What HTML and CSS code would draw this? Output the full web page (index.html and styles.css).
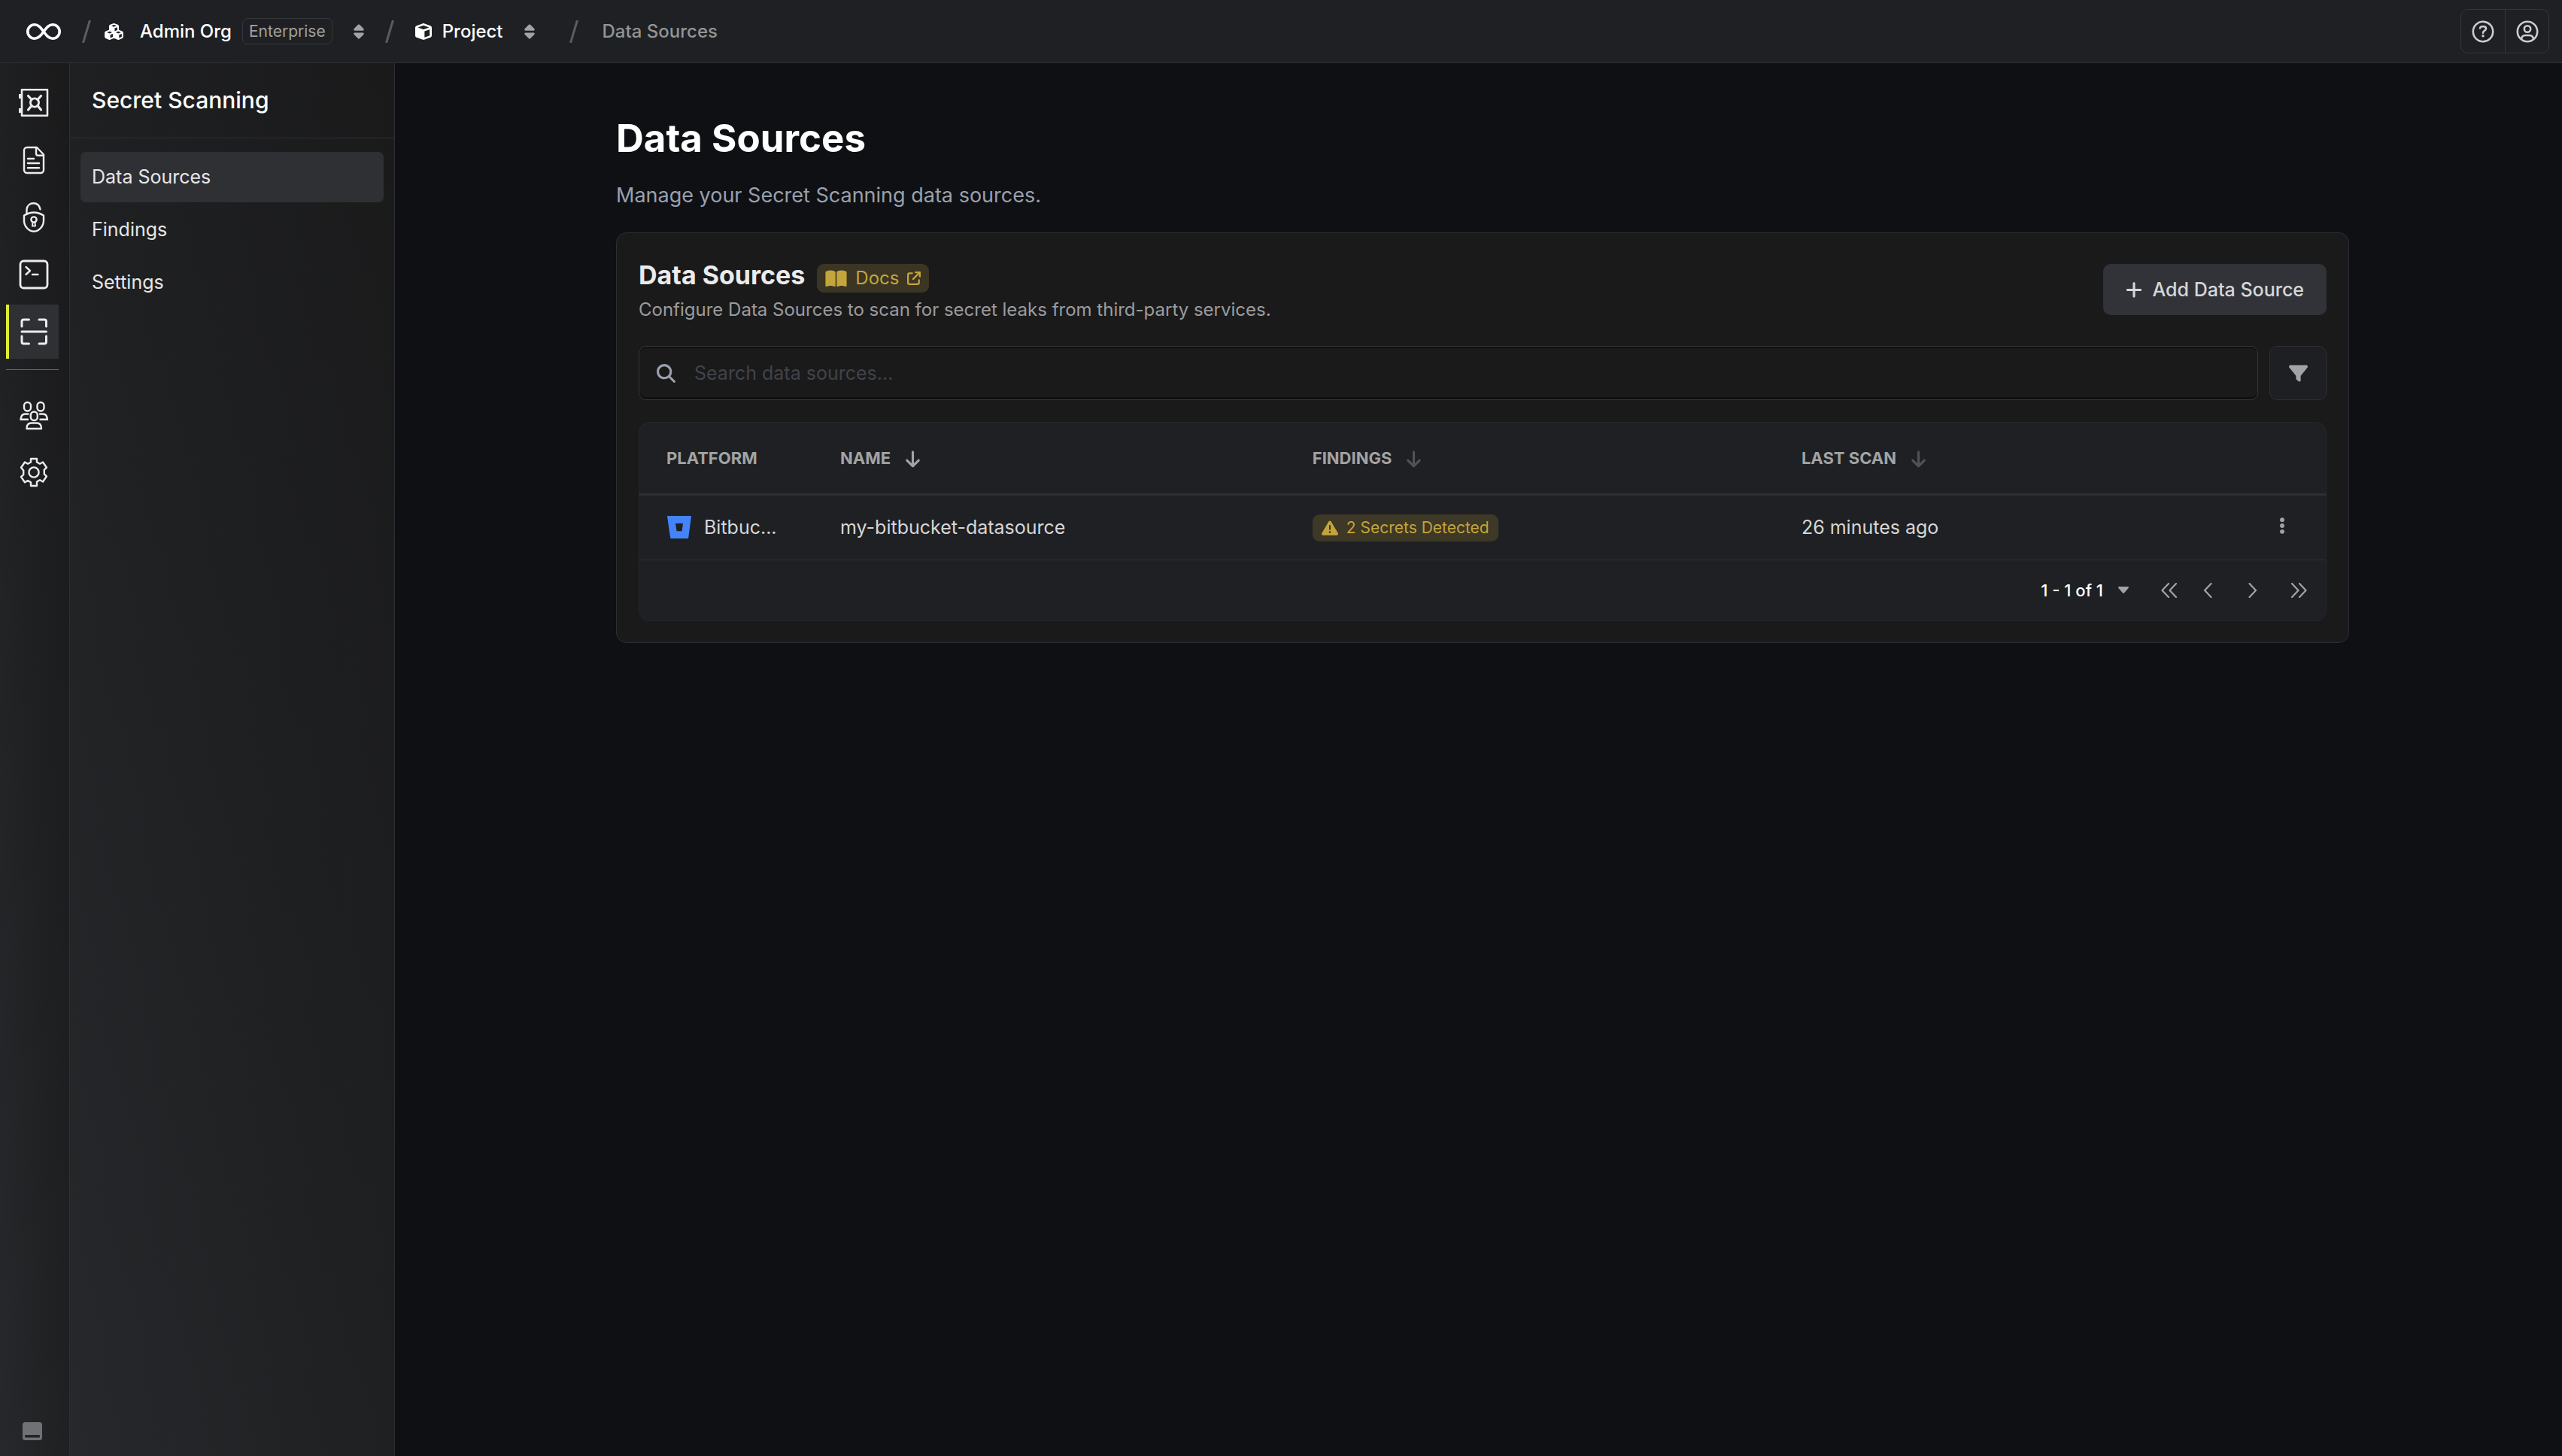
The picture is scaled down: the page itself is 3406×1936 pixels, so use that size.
FILE: index.html
```html
<!DOCTYPE html>
<html lang="en">
<head>
<meta charset="utf-8">
<meta name="viewport" content="width=device-width, initial-scale=1">
<title>Data Sources</title>
<link rel="stylesheet" href="styles.css">
</head>
<body>
<svg class="sprite" aria-hidden="true">
  <symbol id="i-sort" viewBox="0 0 320 512"><path d="M137.400 41.400c12.500-12.500 32.800-12.500 45.300 0l128 128c9.200 9.200 11.900 22.900 6.900 34.900s-16.600 19.800-29.600 19.800H32c-12.900 0-24.600-7.800-29.600-19.800s-2.200-25.700 6.900-34.900l128-128zm0 429.300l-128-128c-9.200-9.200-11.900-22.900-6.900-34.900s16.600-19.800 29.600-19.800H288c12.900 0 24.600 7.800 29.600 19.800s2.200 25.700-6.900 34.900l-128 128c-12.500 12.500-32.800 12.500-45.300 0z"/></symbol>
  <symbol id="i-down" viewBox="0 0 384 512"><path d="M169.400 470.600c12.500 12.500 32.800 12.500 45.300 0l160-160c12.500-12.500 12.500-32.800 0-45.300s-32.800-12.500-45.300 0L224 370.800V64c0-17.700-14.300-32-32-32s-32 14.300-32 32V370.700L54.600 265.300c-12.500-12.500-32.800-12.500-45.300 0s-12.500 32.800 0 45.300l160 160z"/></symbol>
  <symbol id="i-chev" viewBox="0 0 12 20"><path d="M10.500 1L2 10l8.500 9" fill="none" stroke="currentColor" stroke-width="2.200" stroke-linecap="round" stroke-linejoin="round"/></symbol>
  <symbol id="i-chev2" viewBox="0 0 22 20"><path d="M10.500 1L2 10l8.500 9M20.500 1L12 10l8.500 9" fill="none" stroke="currentColor" stroke-width="2.200" stroke-linecap="round" stroke-linejoin="round"/></symbol>
</svg>

<header class="topbar">
  <nav class="crumbs" aria-label="Breadcrumb">
    <a class="logo" href="#" aria-label="Home">
      <svg viewBox="0 0 46 22" fill="none" stroke="#fff" stroke-width="3.600"><path d="M23 11C19 5.500 16 1.800 11 1.800a9.200 9.200 0 0 0 0 18.400C16 20.200 19 16.500 23 11S30 1.800 35 1.800a9.200 9.200 0 0 1 0 18.400C30 20.200 27 16.500 23 11z"/></svg>
    </a>
    <svg class="slash" viewBox="0 0 12 30"><path d="M10.500 0L1.500 30" stroke="#5b5c5f" stroke-width="3"/></svg>
    <a class="crumb crumb-org" href="#">
      <svg class="ic-cubes" viewBox="0 0 576 512" fill="currentColor"><path d="M290.800 48.600l78.400 29.700L288 109.500 206.800 78.300l78.400-29.700c1.800-.7 3.800-.7 5.700 0zM136 92.500V204.700c-1.300 .4-2.600 .8-3.900 1.300l-96 36.400C14.400 250.600 0 271.500 0 294.700V413.900c0 22.200 13.100 42.300 33.500 51.300l96 42.200c14.400 6.300 30.700 6.300 45.100 0L288 457.500l113.500 49.900c14.400 6.300 30.700 6.300 45.100 0l96-42.200c20.300-8.900 33.500-29.100 33.500-51.300V294.700c0-23.300-14.400-44.100-36.100-52.400l-96-36.400c-1.300-.5-2.600-.9-3.900-1.300V92.500c0-23.300-14.400-44.100-36.100-52.400l-96-36.400c-12.800-4.800-26.900-4.800-39.700 0l-96 36.400C150.400 48.400 136 69.300 136 92.500zM392 210.600l-82.400 31.200V152.600L392 121v89.600zM154.800 250.900l78.400 29.700L152 311.700 70.800 280.600l78.400-29.700c1.800-.7 3.800-.7 5.700 0zm18.800 204.400V354.800L256 323.200v95.900l-82.400 36.200zM421.200 250.900c1.800-.7 3.800-.7 5.700 0l78.400 29.700L424 311.700l-81.200-31.100 78.400-29.700zM523.200 421.200l-77.600 34.100V354.800L528 323.200v90.700c0 3.200-1.900 6-4.800 7.300z"/></svg>
      <span>Admin Org</span>
    </a>
    <span class="tag">Enterprise</span>
    <button class="sorter" type="button" aria-label="Switch organization"><svg viewBox="0 0 320 512"><use href="#i-sort"/></svg></button>
    <svg class="slash" viewBox="0 0 12 30"><path d="M10.500 0L1.500 30" stroke="#5b5c5f" stroke-width="3"/></svg>
    <a class="crumb crumb-project" href="#">
      <svg class="ic-cube" viewBox="0 0 512 512" fill="currentColor"><path d="M234.500 5.700c13.900-5 29.100-5 43.100 0l192 68.600C495 83.400 512 107.500 512 134.600V377.400c0 27-17 51.200-42.500 60.300l-192 68.600c-13.900 5-29.100 5-43.100 0l-192-68.600C17 428.600 0 404.500 0 377.400V134.600c0-27 17-51.200 42.500-60.300l192-68.600zM256 66L82.300 128 256 190l173.700-62L256 66zm32 368.600l160-57.100v-188L288 246.600v188z"/></svg>
      <span>Project</span>
    </a>
    <button class="sorter" type="button" aria-label="Switch project"><svg viewBox="0 0 320 512"><use href="#i-sort"/></svg></button>
    <svg class="slash slash-last" viewBox="0 0 12 30"><path d="M10.500 0L1.500 30" stroke="#5b5c5f" stroke-width="3"/></svg>
    <span class="crumb-current" aria-current="page">Data Sources</span>
  </nav>
  <div class="top-actions">
    <button type="button" aria-label="Help"><svg viewBox="0 0 30 30" fill="none" stroke="currentColor" stroke-width="2.600"><circle cx="15" cy="15" r="13.200"/><path d="M11 10.500c.3-1.700 1.400-2.300 3.200-2.300h1.600c2 0 3.200 1.100 3.200 2.800 0 1.400-.8 2.100-2 2.800-1.200.7-2 1.200-2 2.900" stroke-linecap="round"/><circle cx="15" cy="20.800" r="1.800" fill="currentColor" stroke="none"/></svg></button>
    <button type="button" aria-label="Account"><svg viewBox="0 0 30 30" fill="none" stroke="currentColor" stroke-width="2.600"><circle cx="15" cy="15" r="13.200"/><circle cx="15" cy="11.500" r="4.200"/><path d="M7 25c.4-3.200 2.600-5 5.200-5h5.600c2.600 0 4.800 1.800 5.200 5"/></svg></button>
  </div>
</header>

<div class="shell">
  <nav class="rail" aria-label="Products">
    <a class="rail-item" href="#" aria-label="Secret Manager"><svg viewBox="0 0 40 40"><path d="M4 2.200h34v34.600H4z" stroke-width="2.600"/><path d="M0 8h4v6H0zM0 27h4v6H0z" fill="#ececec" stroke="none"/><circle cx="21" cy="19.500" r="5.600" stroke-width="2.800"/><path d="M12.500 10.500l4.500 5M29.500 10.500l-4.500 5M12.500 29l4.500-5.500M29.500 29l-4.500-5.500" stroke-width="3.200"/></svg></a>
    <a class="rail-item" href="#" aria-label="Certificates"><svg viewBox="0 0 40 40"><path d="M11 3h13l9 9.500V33a4 4 0 0 1-4 4H11a4 4 0 0 1-4-4V7a4 4 0 0 1 4-4z"/><path d="M23 3.500V11c0 1.800.8 2.700 2.600 2.700H33M12 18h8M12 24h15M12 30.200h15"/></svg></a>
    <a class="rail-item" href="#" aria-label="Key Management"><svg viewBox="0 0 40 40"><path d="M10.500 15.500V9.500C11 4 15 1.300 19.500 1.300c4.600 0 8 3 9 8M20 13.500c-4 0-8 1-13 4v7c0 7 6 14.200 13 14.200s13-7.200 13-14.200v-7c-5-3-9-4-13-4z"/><circle cx="20" cy="23" r="3.600"/><path d="M18.600 26.500l-.6 5h4l-.6-5" stroke-width="2"/></svg></a>
    <a class="rail-item" href="#" aria-label="SSH"><svg viewBox="0 0 40 40"><rect x="2" y="2" width="36" height="36" rx="4.500" stroke-width="2.800"/><path d="M9.500 10l5.500 5-5.500 5M18 20h7.500"/></svg></a>
    <a class="rail-item active" href="#" aria-label="Secret Scanning" aria-current="page"><svg viewBox="0 0 40 40"><path d="M4 13V6.500C4 5 5 4 6.500 4H13.500M27 4h7c1.500 0 2.500 1 2.500 2.500V13M4 26v7.500C4 35 5 36 6.500 36h7M27 36h7c1.500 0 2.500-1 2.500-2.500V26M4 20h32.500" stroke-width="3"/></svg></a>
    <hr class="rail-line">
    <a class="rail-item" href="#" aria-label="Access Control"><svg viewBox="0 0 40 40"><rect x="7" y="3" width="9" height="11.500" rx="4.200"/><rect x="24.500" y="3" width="9" height="11.500" rx="4.200"/><path d="M12.500 18.500H8c-3 0-5 2.500-5.500 7.300H12M28 18.500h4.500c3 0 5 2.500 5.500 7.300H28.500"/><rect x="15.800" y="15.500" width="9" height="11.500" rx="4.200"/><path d="M10.500 38c0-5 2.500-7.500 6-7.500h7.500c3.500 0 6 2.500 6 7.500z"/></svg></a>
    <a class="rail-item" href="#" aria-label="Settings"><svg viewBox="0 0 40 40"><path d="M16 2h8v4.500l4 2.200 4-2.200 5 7.200-3.200 3v5.600l3.200 3-5 7.200-4-2.200-4 2.200V38h-8v-4.700l-4-2.200-4 2.200-5-7.200 3.200-3v-5.600L3 13.700l5-7.200 4 2.200 4-2.200z" stroke-width="2.400"/><circle cx="20" cy="20" r="6.600"/></svg></a>
    <button class="rail-toggle" type="button" aria-label="Toggle menu"><svg viewBox="0 0 26 24"><path fill-rule="evenodd" d="M3.500 0h19A3.500 3.500 0 0 1 26 3.500v17a3.500 3.500 0 0 1-3.500 3.500h-19A3.500 3.500 0 0 1 0 20.500v-17A3.500 3.500 0 0 1 3.500 0zM4 17a1 1 0 0 0-1 1v1.500a1 1 0 0 0 1 1h18a1 1 0 0 0 1-1V18a1 1 0 0 0-1-1z" fill="#707174"/></svg></button>
  </nav>

  <aside class="panel">
    <div class="panel-title">Secret Scanning</div>
    <nav class="menu" aria-label="Secret Scanning">
      <a class="menu-item active" href="#" aria-current="page">Data Sources</a>
      <a class="menu-item" href="#">Findings</a>
      <a class="menu-item" href="#">Settings</a>
    </nav>
  </aside>

  <main class="main">
    <div class="content">
      <h1>Data Sources</h1>
      <p class="lead">Manage your Secret Scanning data sources.</p>
      <section class="card">
        <div class="card-head">
          <div class="card-text">
            <div class="title-row">
              <h2>Data Sources</h2>
              <a class="docs" href="#">
                <svg class="ic-book" viewBox="0 0 576 512" fill="currentColor"><path d="M249.600 471.500c10.800 3.800 22.400-4.100 22.400-15.500V78.600c0-4.200-1.600-8.400-5-11C247.400 52 202.400 32 144 32C93.500 32 46.300 45.300 18.100 56.100C6.800 60.500 0 71.700 0 83.800V454.100c0 11.900 12.800 20.200 24.100 16.500C55.600 460.100 105.500 448 144 448c33.900 0 79 14 105.600 23.500zm76.800 0C353 462 398.100 448 432 448c38.500 0 88.400 12.100 119.900 22.600c11.300 3.800 24.100-4.600 24.100-16.500V83.800c0-12.100-6.800-23.300-18.100-27.600C529.700 45.300 482.500 32 432 32c-58.400 0-103.400 20-123 35.600c-3.300 2.600-5 6.800-5 11V456c0 11.400 11.700 19.300 22.400 15.500z"/></svg>
                <span>Docs</span>
                <svg class="ic-ext" viewBox="0 0 512 512" fill="currentColor"><path d="M320 0c-17.700 0-32 14.300-32 32s14.300 32 32 32h82.700L201.400 265.400c-12.500 12.500-12.500 32.800 0 45.300s32.800 12.500 45.300 0L448 109.300V192c0 17.700 14.300 32 32 32s32-14.300 32-32V32c0-17.700-14.300-32-32-32H320zM80 32C35.800 32 0 67.800 0 112V432c0 44.200 35.800 80 80 80H400c44.200 0 80-35.800 80-80V320c0-17.700-14.300-32-32-32s-32 14.300-32 32V432c0 8.800-7.200 16-16 16H80c-8.800 0-16-7.200-16-16V112c0-8.800 7.200-16 16-16H192c17.700 0 32-14.300 32-32s-14.300-32-32-32H80z"/></svg>
              </a>
            </div>
            <p class="sub">Configure Data Sources to scan for secret leaks from third-party services.</p>
          </div>
          <button class="add" type="button">
            <svg viewBox="0 0 448 512" fill="currentColor"><path d="M256 80c0-17.700-14.300-32-32-32s-32 14.300-32 32V224H48c-17.700 0-32 14.300-32 32s14.300 32 32 32H192V432c0 17.700 14.300 32 32 32s32-14.300 32-32V288H400c17.700 0 32-14.300 32-32s-14.300-32-32-32H256V80z"/></svg>
            <span>Add Data Source</span>
          </button>
        </div>

        <div class="tools">
          <label class="search">
            <svg viewBox="0 0 512 512" fill="currentColor"><path d="M416 208c0 45.900-14.900 88.300-40 122.700L502.600 457.400c12.500 12.500 12.500 32.800 0 45.300s-32.800 12.500-45.300 0L330.700 376c-34.400 25.200-76.800 40-122.700 40C93.100 416 0 322.900 0 208S93.100 0 208 0S416 93.100 416 208zM208 352a144 144 0 1 0 0-288 144 144 0 1 0 0 288z"/></svg>
            <input type="text" placeholder="Search data sources..." aria-label="Search data sources">
          </label>
          <button class="filter" type="button" aria-label="Filter"><svg viewBox="0 0 512 512" fill="currentColor"><path d="M3.900 54.900C10.500 40.900 24.500 32 40 32H472c15.500 0 29.500 8.900 36.100 22.900s4.600 30.500-5.200 42.500L320 320.900V448c0 12.100-6.800 23.200-17.700 28.600s-23.800 4.300-33.500-3l-64-48c-8.100-6-12.800-15.500-12.800-25.600V320.900L9 97.300C-.7 85.400-2.800 68.800 3.900 54.900z"/></svg></button>
        </div>

        <div class="table-box">
          <table>
            <colgroup><col class="c-platform"><col class="c-name"><col class="c-findings"><col><col class="c-menu"></colgroup>
            <thead>
              <tr>
                <th scope="col">PLATFORM</th>
                <th scope="col">NAME<button class="order on" type="button" aria-label="Sort by name"><svg viewBox="0 0 384 512"><use href="#i-down"/></svg></button></th>
                <th scope="col">FINDINGS<button class="order" type="button" aria-label="Sort by findings"><svg viewBox="0 0 384 512"><use href="#i-down"/></svg></button></th>
                <th scope="col">LAST SCAN<button class="order" type="button" aria-label="Sort by last scan"><svg viewBox="0 0 384 512"><use href="#i-down"/></svg></button></th>
                <td></td>
              </tr>
            </thead>
            <tbody>
              <tr>
                <td><div class="platform"><svg viewBox="0 0 32 30"><path fill-rule="evenodd" fill="#4484fa" d="M.5 0h31a.5.500 0 0 1 .5.600L28.200 29.200a1 1 0 0 1-1 .8H5.200a1 1 0 0 1-1-.8L0 .6A.5.500 0 0 1 .5 0zM11 10l1.600 10.200h7L21 10z"/></svg><span>Bitbuc...</span></div></td>
                <td>my-bitbucket-datasource</td>
                <td><span class="alert"><svg viewBox="0 0 512 512" fill="currentColor"><path d="M256 32c14.200 0 27.300 7.500 34.500 19.800l216 368c7.300 12.400 7.300 27.700 .2 40.100S486.300 480 472 480H40c-14.300 0-27.600-7.700-34.700-20.100s-7-27.800 .2-40.100l216-368C228.700 39.500 241.800 32 256 32zm0 128c-13.300 0-24 10.700-24 24V296c0 13.300 10.700 24 24 24s24-10.700 24-24V184c0-13.300-10.700-24-24-24zm32 224a32 32 0 1 0-64 0 32 32 0 1 0 64 0z"/></svg><span>2 Secrets Detected</span></span></td>
                <td>26 minutes ago</td>
                <td><button class="more" type="button" aria-label="Options"><svg viewBox="0 0 8 22" fill="currentColor"><circle cx="4" cy="3.200" r="2.900"/><circle cx="4" cy="11" r="2.900"/><circle cx="4" cy="18.800" r="2.900"/></svg></button></td>
              </tr>
            </tbody>
          </table>
          <div class="pager">
            <button class="range" type="button">1 - 1 of 1<svg viewBox="0 0 14 9" fill="#a2a3a5"><path d="M1.200 0h11.600c1 0 1.500 1.100.8 1.900L7.900 8.500c-.5.500-1.300.5-1.800 0L.4 1.900C-.3 1.100.2 0 1.200 0z"/></svg></button>
            <button class="pg pg-first" type="button" aria-label="First page"><svg class="w2" viewBox="0 0 22 20"><use href="#i-chev2"/></svg></button>
            <button class="pg" type="button" aria-label="Previous page"><svg viewBox="0 0 12 20"><use href="#i-chev"/></svg></button>
            <button class="pg pg-next" type="button" aria-label="Next page"><svg class="flip" viewBox="0 0 12 20"><use href="#i-chev"/></svg></button>
            <button class="pg pg-last" type="button" aria-label="Last page"><svg class="w2 flip" viewBox="0 0 22 20"><use href="#i-chev2"/></svg></button>
          </div>
        </div>
      </section>
    </div>
  </main>
</div>
</body>
</html>
```
FILE: styles.css
```css
*, *::before, *::after { box-sizing: border-box; }

:root {
  --bg: #0e1014;
  --bar: #1e2023;
  --card: #1a1a1b;
  --line: #2e2f33;
  --hover: #2f3034;
  --muted: #a2a3a5;
  --yellow: #c4a53b;
}

html, body { height: 100%; }

body {
  margin: 0;
  display: flex;
  flex-direction: column;
  background: var(--bg);
  color: #fff;
  font-family: Inter, "Liberation Sans", sans-serif;
  font-size: 25px;
  line-height: 36px;
}

h1, h2, p { margin: 0; }
a { color: inherit; text-decoration: none; }
svg { display: block; flex: none; }
button {
  margin: 0;
  padding: 0;
  border: 0;
  background: none;
  color: inherit;
  font: inherit;
  cursor: pointer;
}
.sprite { position: absolute; width: 0; height: 0; }

/* Top bar */
.topbar {
  flex: none;
  display: flex;
  align-items: center;
  justify-content: space-between;
  height: 84px;
  padding: 0 17px 0 35px;
  background: var(--bar);
  border-bottom: 1px solid var(--line);
}
.crumbs { display: flex; align-items: center; font-size: 24px; font-weight: 500; }
.logo svg { width: 46px; height: 22px; }
.slash { width: 12px; height: 30px; margin: 0 18px 0 28px; }
.slash-last { margin: 0 32px 0 46px; }
.crumb { display: flex; align-items: center; }
.crumb-org { gap: 22px; }
.crumb-project { gap: 14px; margin-left: 10px; }
.ic-cubes { width: 25px; height: 22px; }
.ic-cube { width: 22px; height: 22px; }
.tag {
  margin-left: 14px;
  padding: 0 8px;
  border: 1px solid #37383c;
  border-radius: 7px;
  color: #a0a1a2;
  font-size: 21px;
  font-weight: 400;
  line-height: 33px;
}
.sorter { margin-left: 28px; color: var(--muted); }
.sorter svg { width: 14px; height: 22px; fill: currentColor; }
.crumb-current { color: #939496; }

.top-actions { display: flex; border: 1px solid #35363a; border-radius: 10px; }
.top-actions button {
  display: flex;
  align-items: center;
  justify-content: center;
  width: 58px;
  height: 57px;
  color: #cbcccd;
}
.top-actions button + button { border-left: 1px solid #35363a; }
.top-actions svg { width: 30px; height: 30px; }

/* Shell */
.shell { flex: 1; display: flex; min-height: 0; }
.rail, .panel { background: linear-gradient(to top right, #27282b, #1f2022 50%, #1a1a1b); border-right: 1px solid var(--line); }
.rail {
  flex: none;
  display: flex;
  flex-direction: column;
  gap: 4px;
  width: 93px;
  padding: 17px 14px 21px 8px;
}
.rail-item {
  display: flex;
  align-items: center;
  justify-content: center;
  height: 72px;
  border-left: 4px solid transparent;
}
.rail-item svg {
  width: 40px;
  height: 40px;
  fill: none;
  stroke: #ececec;
  stroke-width: 2.4;
  stroke-linecap: round;
  stroke-linejoin: round;
}
.rail-item.active { background: var(--hover); border-left-color: #e0ed34; }
.rail-line { width: 100%; height: 1px; margin: 10px 0 20px; border: 0; background: #66676a; }
.rail-toggle { margin-top: auto; padding-left: 22px; }
.rail-toggle svg { width: 26px; height: 24px; }

.panel { flex: none; width: 432px; }
.panel-title {
  padding: 0 29px;
  border-bottom: 1px solid var(--line);
  font-size: 30px;
  font-weight: 500;
  line-height: 99px;
}
.menu { display: flex; flex-direction: column; gap: 3px; padding: 18px 14px; }
.menu-item { padding: 0 15px; border-radius: 7px; line-height: 67px; color: #e6e6e7; }
.menu-item.active { background: var(--hover); }

/* Main */
.main { flex: 1; min-width: 0; padding: 68px 0 40px 11px; }
.content { max-width: 2304px; margin: 0 auto; }
h1 { font-size: 51px; font-weight: 700; line-height: 64px; }
.lead { margin-top: 24px; color: #9aa0ad; font-size: 27px; line-height: 40px; }

.card {
  margin-top: 29px;
  padding: 29px 29px 28px;
  border: 1px solid var(--line);
  border-radius: 14px;
  background: var(--card);
}
.card-head { display: flex; align-items: center; justify-content: space-between; margin-bottom: 29px; }
.title-row { display: flex; align-items: center; gap: 16px; }
h2 { color: #ebebec; font-size: 34px; font-weight: 700; line-height: 54px; }
.docs {
  display: flex;
  align-items: center;
  gap: 11px;
  height: 38px;
  margin-top: 8px;
  padding: 0 11px;
  border-radius: 9px;
  background: #3b3523;
  color: var(--yellow);
  font-size: 24px;
}
.ic-book { width: 29px; height: 25px; }
.ic-ext { width: 18px; height: 18px; }
.sub { color: #9c9c9d; font-size: 24px; line-height: 38px; }
.add {
  display: flex;
  align-items: center;
  gap: 14px;
  height: 68px;
  padding: 0 30px;
  border-radius: 10px;
  background: #323338;
  color: #d6d7da;
  font-weight: 500;
}
.add svg { width: 22px; height: 25px; }

.tools { display: flex; gap: 15px; margin-bottom: 29px; }
.search {
  flex: 1;
  display: flex;
  align-items: center;
  gap: 25px;
  height: 72px;
  padding: 0 23px;
  border: 1px solid #35363b;
  border-radius: 10px;
  box-shadow: inset 0 2px 0 #0f1013, inset 0 -3px 0 #0f1013;
  color: #9aa0ad;
}
.search svg { width: 25px; height: 25px; }
.search input {
  flex: 1;
  min-width: 0;
  padding: 0;
  border: 0;
  outline: 0;
  background: none;
  color: #d4d4d6;
  font: inherit;
}
.search input::placeholder { color: #40434b; opacity: 1; }
.filter {
  display: flex;
  align-items: center;
  justify-content: center;
  width: 76px;
  height: 72px;
  border: 1px solid var(--line);
  border-radius: 10px;
  background: #1d1f22;
  color: var(--muted);
}
.filter svg { width: 25px; height: 25px; }

/* Table */
.table-box { overflow: hidden; border: 1px solid #25272a; border-radius: 14px; background: var(--bar); }
table { width: 100%; border-collapse: collapse; table-layout: fixed; }
.c-platform { width: 231px; }
.c-name { width: 28%; }
.c-findings { width: 29%; }
.c-menu { width: 116px; }
th, td { padding: 0 0 0 36px; text-align: left; }
thead tr { height: 95px; border-bottom: 3px solid var(--line); }
th { color: var(--muted); font-size: 22px; font-weight: 700; }
.order { margin-left: 20px; color: #505256; vertical-align: middle; }
.order.on { color: var(--muted); }
.order svg { width: 19px; height: 25px; fill: currentColor; }
tbody tr { height: 87px; border-bottom: 1px solid var(--line); }
tbody td { color: #d6d6d8; }
.platform { display: flex; align-items: center; gap: 16px; }
.platform svg { width: 34px; height: 30px; }
.alert {
  display: inline-flex;
  align-items: center;
  gap: 11px;
  height: 36px;
  padding: 0 12px;
  border-radius: 9px;
  background: #3e3826;
  color: var(--yellow);
  font-size: 21px;
  vertical-align: middle;
}
.alert svg { width: 22px; height: 22px; }
.more { padding: 0 18px; color: var(--muted); }
.more svg { width: 8px; height: 22px; }

.pager { display: flex; align-items: center; justify-content: flex-end; height: 80px; padding-right: 24px; }
.range { display: flex; align-items: center; gap: 20px; font-size: 22px; font-weight: 500; }
.range svg { width: 14px; height: 9px; }
.pg { margin-left: 34px; color: var(--muted); }
.pg svg { width: 12px; height: 20px; }
.pg svg.w2 { width: 23px; }
.pg svg.flip { transform: scaleX(-1); }
.pg-first { margin-left: 42px; }
.pg-next { margin-left: 48px; }
.pg-last { margin-left: 44px; }
```
